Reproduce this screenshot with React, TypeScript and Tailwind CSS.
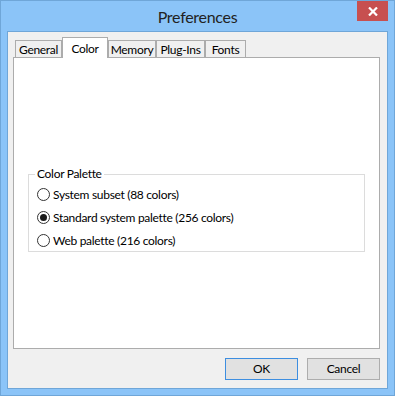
import React from "react";

const font = { fontFamily: 'Lato, "Noto Sans", "Liberation Sans", sans-serif', letterSpacing: "-0.3px" };

function Radio({ checked, label }: { checked?: boolean; label: string }) {
  return (
    <div className="flex items-center h-[23px]">
      <div className="w-[13px] h-[13px] rounded-full border border-[#333333] bg-white flex items-center justify-center">
        {checked && <div className="w-[7px] h-[7px] rounded-full bg-[#1a1a1a]" />}
      </div>
      <span className="ml-[3px] text-[12px] text-black leading-none">{label}</span>
    </div>
  );
}

function Tab({ label, w, selected }: { label: string; w: string; selected?: boolean }) {
  if (selected) {
    return (
      <div className={`${w} h-[21px] relative z-10 bg-white border border-b-0 border-[#acacac] flex items-start justify-center pt-[2px] text-[12px]`}>
        {label}
      </div>
    );
  }
  return (
    <div className={`${w} h-[18px] bg-[#f0f0f0] border border-b-0 border-[#acacac] flex items-center justify-center text-[12px]`}>
      {label}
    </div>
  );
}

export default function App() {
  return (
    <div className="w-[395px] h-[396px] bg-[#8bc4f8] border border-[#6fa6d8] flex flex-col" style={font}>
      <div className="h-[30px] grid grid-cols-[1fr_auto_1fr] items-start">
        <div />
        <div className="text-[16px] text-[#222] pt-[4px]">Preferences</div>
        <div className="flex justify-end pr-[6px]">
          <div className="w-[31px] h-[20px] bg-[#c75050] flex items-center justify-center">
            <svg width="10" height="9" viewBox="0 0 10 9">
              <path d="M1 0.5 L9 8.5 M9 0.5 L1 8.5" stroke="white" strokeWidth="2.2" />
            </svg>
          </div>
        </div>
      </div>
      <div className="mx-[6px] mb-[6px] flex-1 bg-[#f0f0f0] border border-[#6fa6d8] flex flex-col pl-[5px] pr-[7px] pt-[6px]">
        <div className="flex items-end h-[20px] pl-[2px]">
          <Tab label="General" w="w-[47px]" />
          <Tab label="Color" w="w-[46px]" selected />
          <Tab label="Memory" w="w-[48px]" />
          <Tab label="Plug-Ins" w="w-[49px]" />
          <Tab label="Fonts" w="w-[41px]" />
        </div>
        <div className="h-[292px] bg-white border border-[#acacac] -mt-[1px] flex flex-col pt-[116px] px-[14px]">
          <div className="relative border border-[#dcdcdc] h-[78px] pl-[8px] pt-[8px]">
            <div className="absolute -top-[8px] left-[6px] bg-white px-[2px] text-[12px] leading-none pt-[1px]">Color Palette</div>
            <Radio label="System subset (88 colors)" />
            <Radio label="Standard system palette (256 colors)" checked />
            <Radio label="Web palette (216 colors)" />
          </div>
        </div>
        <div className="flex justify-end gap-[9px] mt-[9px]">
          <div className="w-[73px] h-[22px] bg-[#e1e1e1] border border-[#3d8ee0] flex items-center justify-center text-[12px]">OK</div>
          <div className="w-[73px] h-[22px] bg-[#e1e1e1] border border-[#adadad] flex items-center justify-center text-[12px]">Cancel</div>
        </div>
      </div>
    </div>
  );
}
